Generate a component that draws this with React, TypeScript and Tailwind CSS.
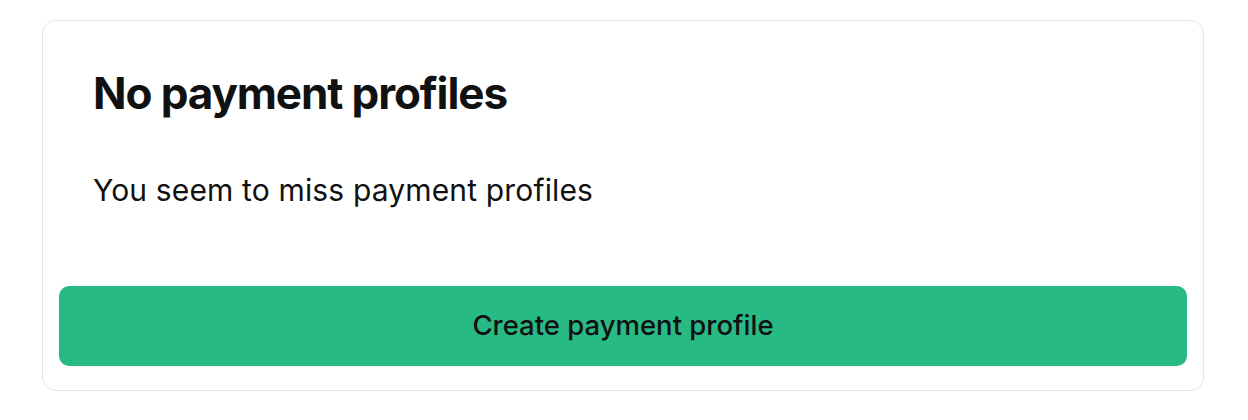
export default function App() {
  return (
    <div className="min-h-screen bg-white pl-[42px] pr-[44px] pt-[20px] font-['Inter','Liberation_Sans',sans-serif]">
      <section className="rounded-[14px] border border-[#e5e5e5] bg-white px-4 pt-4 pb-6">
        <div className="pl-[34px] pr-8 pt-[34px]">
          <h2 className="text-[44px] font-bold leading-none tracking-[-0.025em] text-[#111111]">
            No payment profiles
          </h2>
          <p className="mt-[60px] text-[30px] leading-none tracking-[0.005em] text-[#111111]">
            You seem to miss payment profiles
          </p>
        </div>
        <button
          type="button"
          className="mt-[81px] flex h-[80px] w-full items-center justify-center rounded-[10px] bg-[#28ba85] text-[27.5px] font-medium text-[#111111]"
        >
          Create payment profile
        </button>
      </section>
    </div>
  );
}
